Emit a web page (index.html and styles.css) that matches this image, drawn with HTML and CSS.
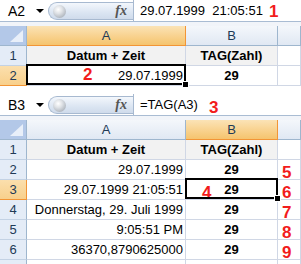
FILE: index.html
```html
<!DOCTYPE html>
<html>
<head>
<meta charset="utf-8">
<link rel="stylesheet" href="styles.css">
</head>
<body>
<div class="pane">
  <div class="fbar">
    <div class="namebox"><span>A2</span><i class="caret"></i></div>
    <div class="pill"><span class="knob"></span><span class="fx">fx</span></div>
    <div class="formula"><span>29.07.1999  21:05:51</span><span class="mark m1">1</span></div>
  </div>
  <div class="strip"></div>
  <div class="sheet">
    <div class="corner"></div><div class="ch sel">A</div><div class="ch">B</div><div class="ch"></div>
    <div class="rh">1</div><div class="c head">Datum + Zeit</div><div class="c head">TAG(Zahl)</div><div class="c"></div>
    <div class="rh sel">2</div><div class="c r active"><span class="mark over m2">2</span>29.07.1999</div><div class="c b">29</div><div class="c"></div>
  </div>
</div>
<div class="gap"></div>
<div class="pane">
  <div class="fbar">
    <div class="namebox"><span>B3</span><i class="caret"></i></div>
    <div class="pill"><span class="knob"></span><span class="fx">fx</span></div>
    <div class="formula"><span>=TAG(A3)</span><span class="mark m3">3</span></div>
  </div>
  <div class="strip"></div>
  <div class="sheet">
    <div class="corner"></div><div class="ch">A</div><div class="ch sel">B</div><div class="ch"></div>
    <div class="rh">1</div><div class="c head">Datum + Zeit</div><div class="c head">TAG(Zahl)</div><div class="c"></div>
    <div class="rh">2</div><div class="c r">29.07.1999</div><div class="c b">29</div><div class="c ann"><span class="mark">5</span></div>
    <div class="rh sel">3</div><div class="c r">29.07.1999 21:05:51</div><div class="c b active"><span class="mark over m4">4</span>29</div><div class="c ann"><span class="mark">6</span></div>
    <div class="rh">4</div><div class="c r">Donnerstag, 29. Juli 1999</div><div class="c b">29</div><div class="c ann"><span class="mark">7</span></div>
    <div class="rh">5</div><div class="c r">9:05:51 PM</div><div class="c b">29</div><div class="c ann"><span class="mark">8</span></div>
    <div class="rh">6</div><div class="c r">36370,8790625000</div><div class="c b">29</div><div class="c ann"><span class="mark">9</span></div>
    <div class="rh"></div><div class="c"></div><div class="c"></div><div class="c"></div>
  </div>
</div>
</body>
</html>
```
FILE: styles.css
```css
html, body {
  margin: 0;
  padding: 0;
}
body {
  width: 301px;
  height: 264px;
  overflow: hidden;
  background: #fff;
  font-family: "Liberation Sans", Arial, sans-serif;
  font-size: 13px;
  color: #000;
}
.fbar {
  display: flex;
  height: 22px;
  box-sizing: border-box;
  border-bottom: 1px solid #a9bcd3;
  background: #fff;
}
.namebox {
  width: 48px;
  box-sizing: border-box;
  display: flex;
  align-items: center;
  padding-left: 8px;
  font-size: 14px;
}
.caret {
  margin-left: 11px;
  width: 0;
  height: 0;
  border-left: 4px solid transparent;
  border-right: 4px solid transparent;
  border-top: 4px solid #000;
}
.pill {
  width: 85px;
  height: 18px;
  margin-top: 2px;
  box-sizing: border-box;
  border: 1px solid #a7b9d0;
  border-right: none;
  border-radius: 10px 0 0 10px;
  background: linear-gradient(#f3f7fc, #dbe5f2 60%, #cfdbeb);
  display: flex;
  align-items: center;
  padding-left: 4px;
}
.knob {
  width: 13px;
  height: 13px;
  border-radius: 50%;
  background: radial-gradient(circle at 40% 35%, #ffffff 0%, #dfe2e6 35%, #aab1ba 80%, #9aa2ad 100%);
}
.fx {
  margin-left: auto;
  margin-right: 6px;
  font-family: "Liberation Serif", serif;
  font-style: italic;
  font-weight: bold;
  font-size: 14px;
  color: #555;
}
.formula {
  flex: 1;
  border-left: 1px solid #a7b9d0;
  display: flex;
  align-items: center;
  padding-left: 6px;
  white-space: pre;
}
.mark {
  color: #f21c1c;
  font-weight: bold;
  font-size: 17px;
  line-height: 17px;
}
.m1 {
  margin-left: 6px;
  margin-top: 2px;
}
.m3 {
  margin-left: 11px;
  margin-top: 6px;
}
.strip {
  height: 4px;
  background: #f1f4f9;
}
.gap {
  height: 8px;
}
.sheet {
  display: grid;
  grid-template-columns: 27px 159px 92px 1fr;
  grid-auto-rows: 20px;
}
.sheet > div {
  box-sizing: border-box;
  white-space: nowrap;
}
.corner {
  position: relative;
  background: #b3c8e8;
  border-right: 1px solid #9eb6ce;
  border-bottom: 1px solid #9eb6ce;
}
.corner::after {
  content: "";
  position: absolute;
  right: 3px;
  bottom: 3px;
  width: 0;
  height: 0;
  border-left: 13px solid transparent;
  border-bottom: 12px solid #e8eff9;
}
.ch {
  display: flex;
  align-items: center;
  justify-content: center;
  background: linear-gradient(#f4f7fb, #e0e8f3);
  border-right: 1px solid #9eb6ce;
  border-bottom: 1px solid #9eb6ce;
  color: #213a56;
}
.ch.sel {
  background: linear-gradient(#fbe3b6, #f8d08a 60%, #f5c46e);
  border-right-color: #f29536;
  border-bottom-color: #f29536;
}
.rh {
  display: flex;
  align-items: center;
  justify-content: center;
  background: #e4ecf7;
  border-right: 1px solid #9eb6ce;
  border-bottom: 1px solid #c3d2e4;
  color: #213a56;
}
.rh.sel {
  background: linear-gradient(#fbdfad, #f8d08c);
  border-right-color: #f29536;
  border-bottom-color: #f29536;
}
.c {
  display: flex;
  align-items: center;
  padding: 0 2px;
  border-right: 1px solid #d0d7e5;
  border-bottom: 1px solid #d0d7e5;
}
.c.r {
  justify-content: flex-end;
}
.c.b {
  justify-content: center;
  font-weight: bold;
}
.c.head {
  justify-content: center;
  font-weight: bold;
  background: #f2f2f2;
}
.c.ann {
  display: block;
  padding: 4px 0 0 4px;
}
.active {
  position: relative;
}
.active::after {
  content: "";
  position: absolute;
  top: -2px;
  left: -1px;
  right: -1px;
  bottom: 0;
  border: 2px solid #000;
}
.active::before {
  content: "";
  position: absolute;
  right: -4px;
  bottom: -3px;
  width: 5px;
  height: 5px;
  background: #000;
  border: 1px solid #fff;
  z-index: 2;
}
.over {
  position: absolute;
  top: 0;
}
.m2 {
  left: 56px;
}
.m4 {
  left: 16px;
  top: 4px;
}
```
